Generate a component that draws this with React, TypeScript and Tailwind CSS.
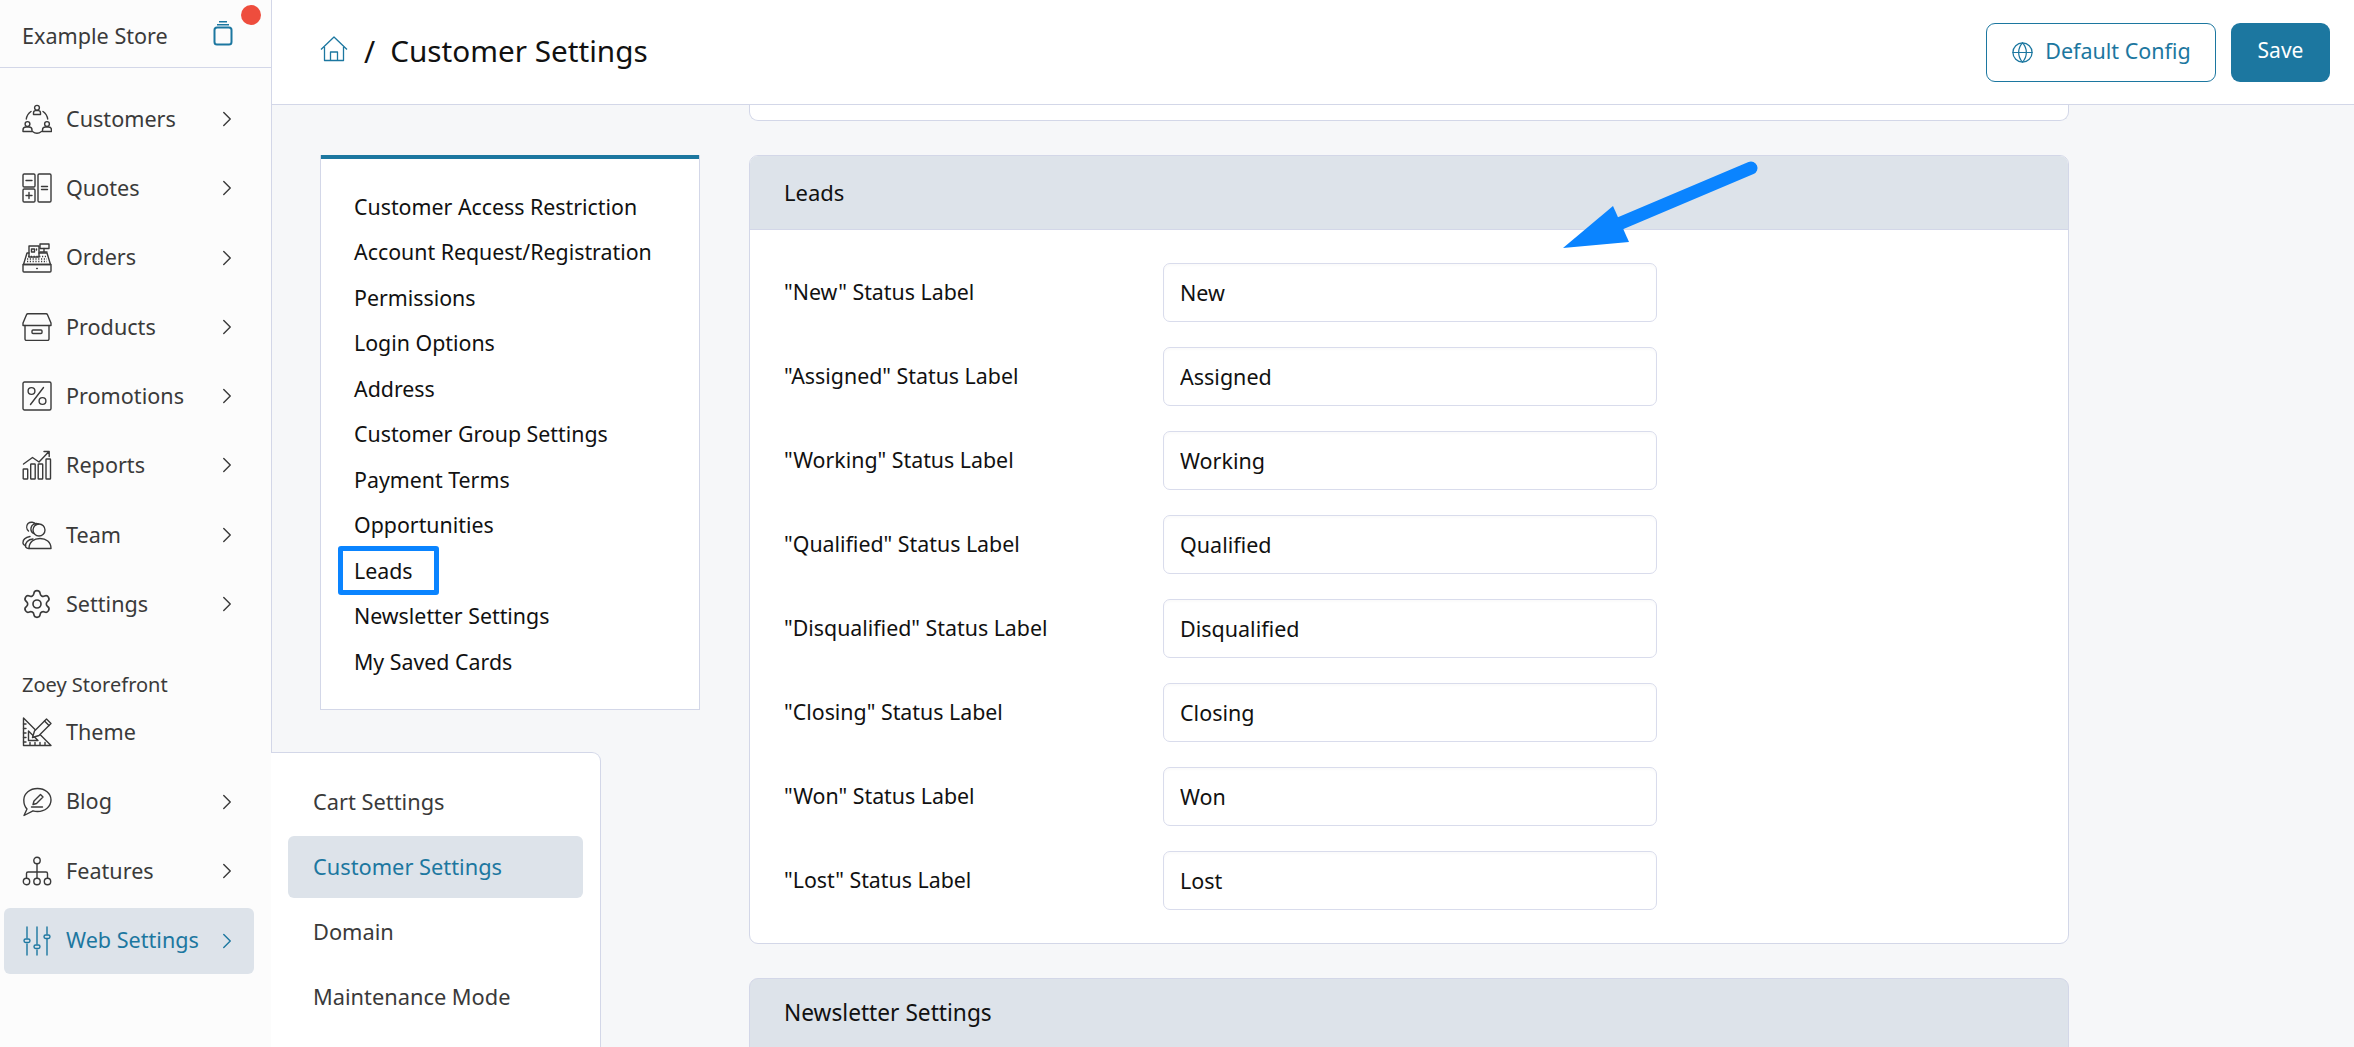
import React from "react";
import { ChevronRight, Globe, Settings as Gear } from "lucide-react";

const S = (p: { children: React.ReactNode; c?: string }) => (
  <svg viewBox="0 0 30 30" width={30} height={30} fill="none" stroke="currentColor" strokeWidth={1.4} strokeLinecap="round" strokeLinejoin="round" className={"shrink-0 " + (p.c || "")}>
    {p.children}
  </svg>
);

const Icons: Record<string, React.ReactNode> = {
  Customers: (
    <S>
      <circle cx="15" cy="3.800" r="2.400" /><path d="M11.500 10.500v-1.500c0-1.400 1-2.400 2-2.400h3c1 0 2 1 2 2.400v1.500z" />
      <circle cx="5.500" cy="20" r="2.400" /><path d="M1 27.500v-1.500c0-2 1.400-3 3-3h3c1.600 0 3 1 3 3v1.500z" />
      <circle cx="25" cy="20" r="2.400" /><path d="M20.500 27.500v-1.500c0-2 1.400-3 3-3h3c1.600 0 3 1 3 3v1.500z" />
      <path d="M9 7.500A11 11 0 0 0 4.300 15M21 7.500A11 11 0 0 1 25.700 15M10.500 27.500c2.600 2 6.400 2 9 0" />
    </S>
  ),
  Quotes: (
    <S>
      <rect x="1" y="1" width="12" height="13" rx="1.200" /><rect x="1" y="16" width="12" height="13" rx="1.200" /><rect x="16" y="1" width="13" height="28" rx="1.200" />
      <path d="M4 7.500h6M4 22.500h6M7 19.500v6M19.500 13.500h6M19.500 16.500h6" />
    </S>
  ),
  Orders: (
    <S>
      <rect x="7" y="3" width="10" height="11" /><rect x="18" y="1" width="9" height="4.500" />
      <path d="M22 5.500V9M18 9h7M9.500 6h3v3h-3zM14.500 6v1" />
      <path d="M7 10H5L1.500 21.500h27L25 10h-8" />
      <path d="M6 13.500h18M5 16h20M5 18.500h20" strokeDasharray="1.200 1.600" strokeLinecap="butt" />
      <path d="M1 21.500h28v6.500a1 1 0 0 1-1 1H2a1 1 0 0 1-1-1z" /><path d="M14.700 25.500h.6" />
    </S>
  ),
  Products: (
    <S>
      <path d="M1 11l3.500-8.300a1.500 1.500 0 0 1 1.400-.9h18.200a1.500 1.500 0 0 1 1.400.9L29 11v2.500H1z" />
      <path d="M3 13.500V27a1.400 1.400 0 0 0 1.400 1.400h21.200A1.400 1.400 0 0 0 27 27V13.500" />
      <rect x="10" y="18" width="10" height="3.500" rx="1" />
    </S>
  ),
  Promotions: (
    <S>
      <rect x="1" y="1" width="28" height="28" rx="1.500" />
      <circle cx="9.500" cy="10" r="3.400" /><circle cx="20.500" cy="20" r="3.400" /><path d="M21.500 6.500L8.500 23.500" />
    </S>
  ),
  Reports: (
    <S>
      <rect x="1.200" y="19" width="4.500" height="10" rx=".6" /><rect x="8.700" y="14" width="4.500" height="15" rx=".6" /><rect x="16.200" y="14" width="4.500" height="15" rx=".6" /><rect x="24" y="9" width="4.500" height="20" rx=".6" />
      <path d="M1.500 14l9-6.500 6.500 4.500L27 1.500M22 1.500h5.200v5" />
    </S>
  ),
  Team: (
    <S>
      <circle cx="17" cy="10" r="6" />
      <path d="M14 4.500A5.500 5.500 0 0 0 6 3.500 5.500 5.500 0 0 0 6.500 11M16.500 4A5.500 5.500 0 0 0 9 8a5.500 5.500 0 0 0 2.500 5.500" />
      <path d="M7 28.500C7 22 12 18.500 18 18.500S29 22 29 28.500z" />
      <path d="M11 19C6 19.500 3 22.500 3.500 26.500 4 28 5.500 28.500 7 28.500" />
      <path d="M8 16.500C3 17.500.8 20 1 23c0 1 1 2.500 2.500 2.500" />
    </S>
  ),
  Settings: <Gear size={32} strokeWidth={1.25} className="ml-[-1px] mr-[-1px] shrink-0" />,
  Theme: (
    <S>
      <path d="M1.500 1v27.500H29L16 15.500 1.500 1z" /><path d="M6.500 14v9.500H16z" />
      <path d="M1.500 7h2.500M1.500 11.500h2.500M1.500 16h2.500M1.500 20.500h2.500M1.500 25h2.500M8 28v-2.500M13 28v-2.500M18 28v-2.500M23 28v-2.500" />
      <path d="M10.500 20.500l2-6.500L24.500 2l4.500 4.500L17 18.500z" fill="#fcfcfc" /><path d="M22.500 4l4.500 4.500" />
    </S>
  ),
  Blog: (
    <S>
      <path d="M15.500 1.500c7.500 0 13.500 5 13.500 11.500s-6 11.500-13.500 11.500c-1.500 0-3-.2-4.500-.7L2 28.500l3-6.500C3 20 1.800 16.500 1.800 13 1.800 6.500 8 1.500 15.500 1.500z" />
      <path d="M11 17.500l1-3.500 6.500-6.500 2.500 2.500-6.500 6.500zM9.500 20h11" />
    </S>
  ),
  Features: (
    <S>
      <circle cx="15" cy="4.500" r="3.200" /><circle cx="4.500" cy="25.500" r="3.200" /><circle cx="15" cy="25.500" r="3.200" /><circle cx="25.500" cy="25.500" r="3.200" />
      <path d="M15 7.700v14.600M4.500 22.300v-4.800a1.500 1.500 0 0 1 1.500-1.500h18a1.500 1.500 0 0 1 1.500 1.500v4.800" />
    </S>
  ),
  "Web Settings": (
    <S>
      <path d="M5 1v11M5 18v11M15 1v17M15 24v5M25 1v7M25 13v16" />
      <rect x="2" y="13" width="6" height="3.500" rx="1.700" /><rect x="12" y="19" width="6" height="3.500" rx="1.700" /><rect x="22" y="9" width="6" height="3.500" rx="1.700" />
    </S>
  ),
};

const NavRow = ({ label, active, chevron = true }: { label: string; active?: boolean; chevron?: boolean }) => (
  <div className={"ml-[4px] flex h-[66px] w-[250px] items-center rounded-[6px] pl-[18px] pr-[20px] " + (active ? "bg-[#dde3ea] text-[#1c77a0]" : "text-[#3a3a3a]")}>
    {Icons[label]}
    <span className="ml-[14px] flex-1 text-[21.600px]">{label}</span>
    {chevron && <ChevronRight size={26} strokeWidth={1.3} className="mr-[-6px]" />}
  </div>
);

const menu = ["Customer Access Restriction", "Account Request/Registration", "Permissions", "Login Options", "Address", "Customer Group Settings", "Payment Terms", "Opportunities", "Leads", "Newsletter Settings", "My Saved Cards"];
const fields = ["New", "Assigned", "Working", "Qualified", "Disqualified", "Closing", "Won", "Lost"];

export default function App() {
  return (
    <div className="relative flex h-[1047px] w-full overflow-hidden bg-[#f6f7f9] font-['Noto_Sans',sans-serif] text-[#111]">
      <aside className="w-[272px] shrink-0 border-r border-[#d3d7e8] bg-[#fcfcfc]">
        <div className="relative flex h-[68px] items-center border-b border-[#d3d7e8] pl-[22px] text-[21.600px] text-[#3a3a3a]">
          <span className="mt-[5px]">Example Store</span>
          <svg viewBox="0 0 20 26" width={20} height={26} fill="none" stroke="#1c77a0" strokeWidth={1.6} className="absolute left-[213px] top-[20px]">
            <rect x="1.500" y="7.500" width="17" height="17" rx="2.500" strokeWidth={2} />
            <path d="M4 4.800h12M6 1.800h8" />
          </svg>
          <span className="absolute left-[241px] top-[5px] h-[20px] w-[20px] rounded-full bg-[#ee4d3d]" />
        </div>
        <nav className="flex flex-col gap-[3.300px] pt-[18px]">
          {["Customers", "Quotes", "Orders", "Products", "Promotions", "Reports", "Team", "Settings"].map((l) => (
            <NavRow key={l} label={l} />
          ))}
        </nav>
        <div className="mt-[33px] h-[29px] pl-[22px] text-[20px] leading-[30px] text-[#3a3a3a]">Zoey Storefront</div>
        <div className="flex flex-col gap-[3.500px]">
          <NavRow label="Theme" chevron={false} />
          <NavRow label="Blog" />
          <NavRow label="Features" />
          <NavRow label="Web Settings" active />
        </div>
      </aside>

      <main className="flex min-w-0 flex-1 flex-col">
        <header className="flex h-[105px] shrink-0 items-center border-b border-[#d3d7e8] bg-white pl-[48px] pr-[24px]">
          <svg viewBox="0 0 28 26" width={28} height={26} fill="none" stroke="#1c77a0" strokeWidth={1.3} strokeLinejoin="round" className="mt-[-6px]">
            <path d="M1 13.500L14 1l13 12.500M4.500 11v13.500h19V11" /><path d="M10.500 24.500v-8.500h7v8.500" />
          </svg>
          <span className="ml-[16px] mt-[-2px] text-[30px] text-[#111]">/</span>
          <h1 className="ml-[15px] mt-[-2px] text-[29.700px] font-normal text-[#111]">Customer Settings</h1>
          <button className="ml-auto flex h-[59px] w-[230px] items-center justify-center rounded-[9px] border border-[#1c77a0] pb-[2px] text-[21.500px] text-[#1c77a0]">
            <Globe size={23} strokeWidth={1.3} className="mr-[11px] mt-[2px]" />
            Default Config
          </button>
          <button className="ml-[15px] h-[59px] w-[99px] rounded-[9px] bg-[#1c77a0] pb-[2px] text-[21px] text-white">Save</button>
        </header>

        <div className="flex min-h-0 flex-1 gap-[49px] pl-[48px]">
          <div className="mt-[50px] h-[555px] w-[380px] shrink-0 border border-t-0 border-[#d3d7e8] bg-white">
            <div className="h-[4px] bg-[#1c77a0]" />
            <ul className="pl-[33px] pt-[25px] text-[21.350px]">
              {menu.map((m) => (
                <li key={m} className="flex h-[45.500px] items-center">
                  {m === "Leads" ? (
                    <span className="ml-[-16px] flex h-[49px] w-[101px] items-center rounded-[3px] border-[5px] border-[#0a84ff] pl-[11px]">{m}</span>
                  ) : (
                    m
                  )}
                </li>
              ))}
            </ul>
          </div>

          <div className="w-[1320px] shrink-0">
            <div className="h-[16px] rounded-b-[9px] border border-t-0 border-[#d3d7e8] bg-white" />
            <section className="mt-[34px] overflow-hidden rounded-[9px] border border-[#d3d7e8] bg-white">
              <div className="flex h-[74px] items-center border-b border-[#d3d7e8] bg-[#dde3ea] pb-[1px] pl-[34px] text-[22px]">Leads</div>
              <div className="flex flex-col gap-[25px] pb-[33px] pl-[34px] pt-[33px]">
                {fields.map((f) => (
                  <div key={f} className="flex h-[59px] items-center">
                    <label className="w-[379px] text-[21.350px]">"{f}" Status Label</label>
                    <input readOnly value={f} className="h-[59px] w-[494px] rounded-[7px] border border-[#d9dcec] bg-white px-[16px] text-[21.500px] text-[#111] shadow-[inset_0_2px_3px_rgba(0,0,0,0.02)]" />
                  </div>
                ))}
              </div>
            </section>
            <section className="mt-[34px] h-[100px] rounded-t-[9px] border border-[#d3d7e8] bg-[#dde3ea]">
              <div className="flex h-[69px] items-center pl-[34px] text-[22.700px]">Newsletter Settings</div>
            </section>
          </div>
        </div>
      </main>

      <div className="absolute left-[271px] top-[752px] h-[320px] w-[330px] rounded-tr-[9px] border border-l-0 border-[#d3d7e8] bg-white pl-[17px] pr-[17px] pt-[18px] text-[21.800px] text-[#3a3a3a]">
        {["Cart Settings", "Customer Settings", "Domain", "Maintenance Mode"].map((s) => (
          <div key={s} className={"mb-[3px] flex h-[62px] items-center rounded-[6px] pl-[25px] " + (s === "Customer Settings" ? "bg-[#dde3ea] text-[#1c77a0]" : "")}>
            {s}
          </div>
        ))}
      </div>

      <svg viewBox="0 0 210 100" width={210} height={100} className="absolute left-[1555px] top-[155px]">
        <path d="M66 68L196 13" stroke="#0a84ff" strokeWidth={13} strokeLinecap="round" />
        <polygon points="8,93 58,51 74,87" fill="#0a84ff" />
      </svg>
    </div>
  );
}
